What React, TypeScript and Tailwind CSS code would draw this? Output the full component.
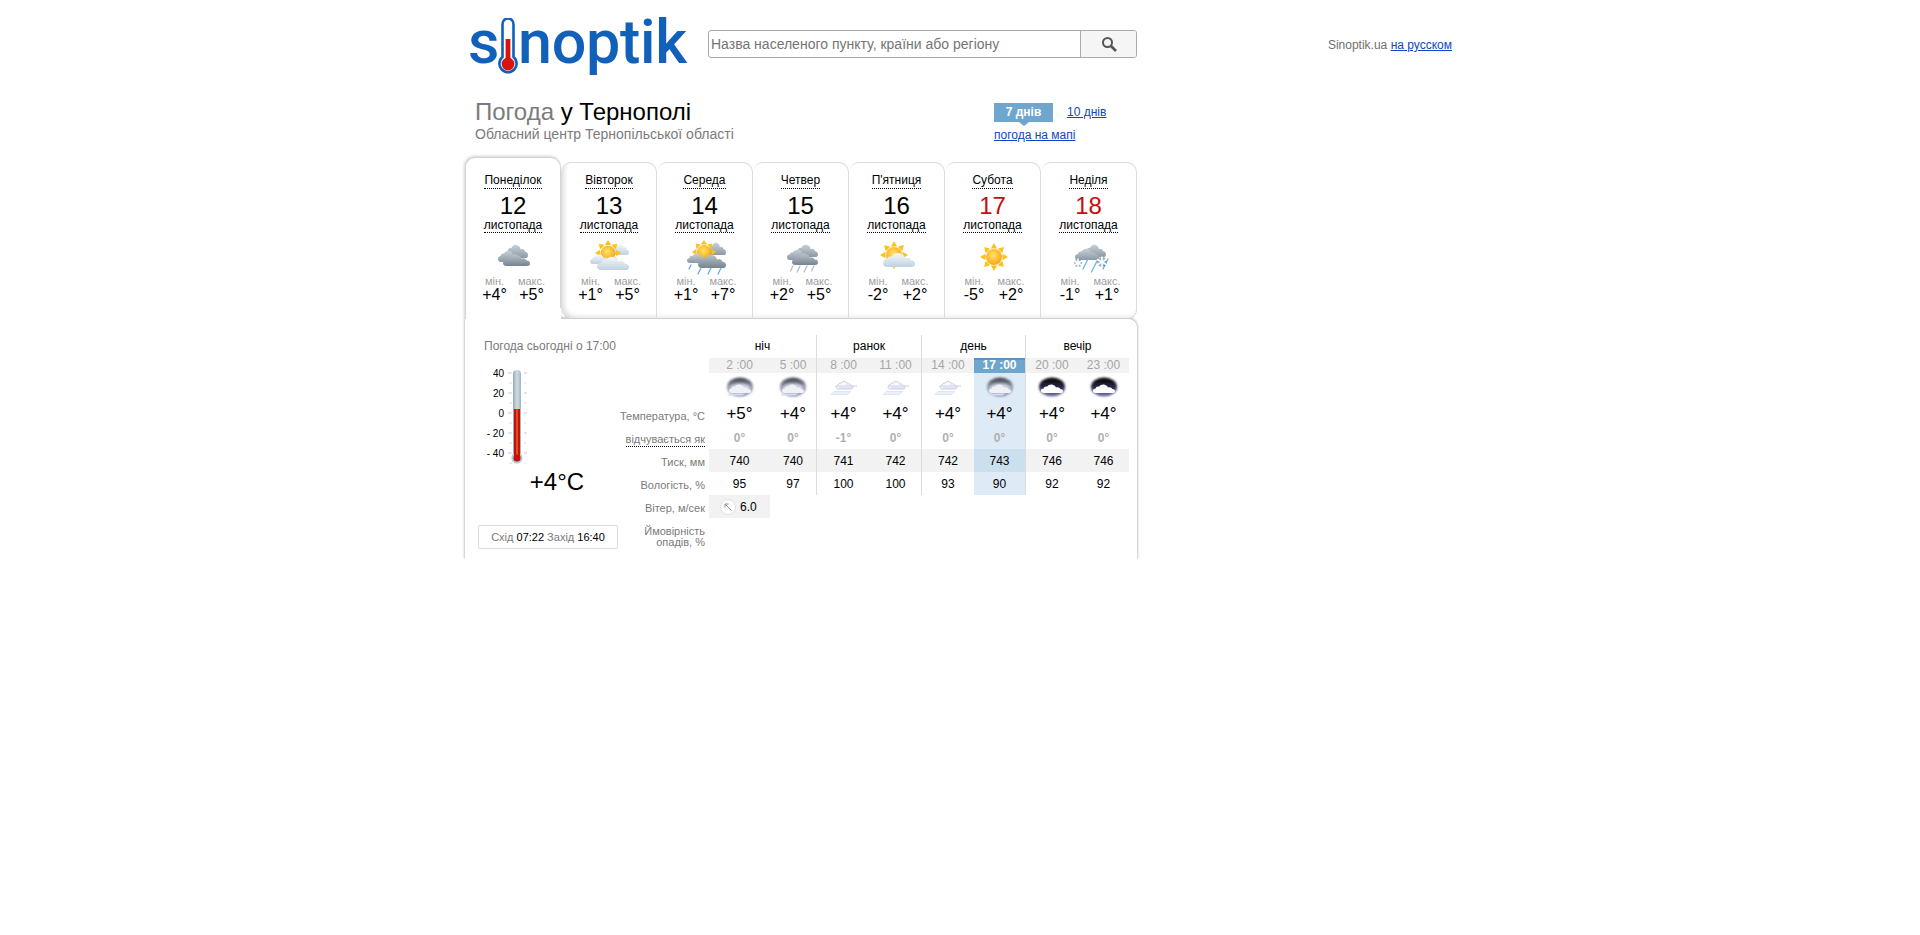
import clsx from "clsx";

const days = [
  { name: "Понеділок", date: 12, min: "+4°", max: "+5°", icon: "cloudy" },
  { name: "Вівторок", date: 13, min: "+1°", max: "+5°", icon: "partly" },
  { name: "Середа", date: 14, min: "+1°", max: "+7°", icon: "sunrain" },
  { name: "Четвер", date: 15, min: "+2°", max: "+5°", icon: "rain" },
  { name: "П'ятниця", date: 16, min: "-2°", max: "+2°", icon: "suncloud" },
  { name: "Субота", date: 17, min: "-5°", max: "+2°", icon: "sun", red: true },
  { name: "Неділя", date: 18, min: "-1°", max: "+1°", icon: "snow", red: true },
];

const hours = [
  { time: "2 :00", sky: "day", temp: "+5°", feel: "0°", pressure: 740, humidity: 95 },
  { time: "5 :00", sky: "day", temp: "+4°", feel: "0°", pressure: 740, humidity: 97 },
  { time: "8 :00", sky: "haze", temp: "+4°", feel: "-1°", pressure: 741, humidity: 100, sep: true },
  { time: "11 :00", sky: "haze", temp: "+4°", feel: "0°", pressure: 742, humidity: 100 },
  { time: "14 :00", sky: "haze", temp: "+4°", feel: "0°", pressure: 742, humidity: 93, sep: true },
  { time: "17 :00", sky: "day", temp: "+4°", feel: "0°", pressure: 743, humidity: 90, active: true },
  { time: "20 :00", sky: "night", temp: "+4°", feel: "0°", pressure: 746, humidity: 92, sep: true },
  { time: "23 :00", sky: "night", temp: "+4°", feel: "0°", pressure: 746, humidity: 92 },
];

const cols = "grid grid-cols-[61px_46px_54px_51px_53px_51px_53px_51px]";
const CLOUD =
  "M5 20C2 20 0 18 0 15C0 12 2 10 5 10C5 7 8 5 11 6C13 2 18 0 22 2C25 3 27 5 27 8C30 6 34 8 35 11C38 11 40 13 40 16C40 19 38 20 35 20Z";

function Cloud({ x, y, w, h, fill }: { x: number; y: number; w: number; h: number; fill: string }) {
  return <path d={CLOUD} fill={fill} transform={`translate(${x} ${y}) scale(${w / 40} ${h / 20})`} />;
}

function Sun({ cx, cy, r, tip }: { cx: number; cy: number; r: number; tip: number }) {
  return (
    <g>
      {[0, 45, 90, 135, 180, 225, 270, 315].map((a) => (
        <path
          key={a}
          d={`M${cx - 3.2} ${cy - r - 0.5}L${cx} ${cy - tip}L${cx + 3.2} ${cy - r - 0.5}Z`}
          fill="#fbc21a"
          transform={`rotate(${a} ${cx} ${cy})`}
        />
      ))}
      <circle cx={cx} cy={cy} r={r} fill="url(#sunFill)" />
    </g>
  );
}

function Streaks({ items, color }: { items: number[][]; color: string }) {
  return (
    <g stroke={color} strokeWidth="1.3" strokeLinecap="round">
      {items.map(([x, y, l], i) => (
        <line key={i} x1={x} y1={y} x2={x - l / 2} y2={y + l} />
      ))}
    </g>
  );
}

function Flake({ x, y, r }: { x: number; y: number; r: number }) {
  return (
    <g stroke="#fff" strokeWidth="1.6" strokeLinecap="round">
      <circle cx={x} cy={y} r={r} fill="#5f7f95" stroke="none" opacity="0.6" />
      {[0, 60, 120].map((a) => (
        <line key={a} x1={x} y1={y - r} x2={x} y2={y + r} transform={`rotate(${a} ${x} ${y})`} />
      ))}
    </g>
  );
}

function SkyIcon({ kind }: { kind: string }) {
  return (
    <svg width="50" height="36" viewBox="0 0 50 36" className="block mx-auto">
      {kind === "cloudy" && (
        <g>
          <Cloud x={17} y={5} w={23} h={14} fill="url(#greyFill)" />
          <Cloud x={10} y={11} w={22} h={12} fill="url(#greyFill)" />
          <Cloud x={15} y={15} w={27} h={12} fill="url(#darkFill)" />
        </g>
      )}
      {kind === "partly" && (
        <g>
          <Cloud x={28} y={4} w={17} h={12} fill="url(#paleFill)" />
          <Sun cx={24} cy={14} r={7.5} tip={13} />
          <Cloud x={6} y={15} w={20} h={10} fill="url(#paleFill)" />
          <Cloud x={13} y={17} w={32} h={14} fill="url(#paleFill)" />
        </g>
      )}
      {kind === "sunrain" && (
        <g>
          <Cloud x={27} y={3} w={19} h={13} fill="url(#greyFill)" />
          <Sun cx={24} cy={13} r={7} tip={12} />
          <Cloud x={7} y={14} w={20} h={10} fill="url(#greyFill)" />
          <Cloud x={18} y={15} w={28} h={14} fill="url(#darkFill)" />
          <Streaks items={[[11, 26, 4], [21, 29, 6], [31, 29, 6], [41, 29, 6]]} color="#5fb0e0" />
        </g>
      )}
      {kind === "rain" && (
        <g>
          <Cloud x={19} y={5} w={23} h={13} fill="url(#greyFill)" />
          <Cloud x={11} y={10} w={22} h={11} fill="url(#greyFill)" />
          <Cloud x={16} y={14} w={26} h={12} fill="url(#darkFill)" />
          <Streaks items={[[17, 27, 5], [24, 27, 6], [31, 27, 6], [38, 27, 5]]} color="#b4bec6" />
        </g>
      )}
      {kind === "suncloud" && (
        <g>
          <Sun cx={22} cy={16} r={8} tip={14} />
          <Cloud x={11} y={13} w={32} h={15} fill="url(#paleFill)" />
        </g>
      )}
      {kind === "sun" && <Sun cx={26} cy={18} r={8} tip={14} />}
      {kind === "snow" && (
        <g>
          <Cloud x={20} y={5} w={22} h={13} fill="url(#greyFill)" />
          <Cloud x={11} y={9} w={24} h={12} fill="url(#greyFill)" />
          <Streaks items={[[24, 20, 10], [33, 22, 11], [44, 20, 10]]} color="#6cb5e2" />
          <Flake x={14} y={24} r={4} />
          <Flake x={38} y={23} r={5} />
        </g>
      )}
    </svg>
  );
}

function HourIcon({ kind }: { kind: string }) {
  if (kind === "haze") {
    return (
      <svg width="32" height="24" viewBox="0 0 32 24" className="block mx-auto">
        <g transform="translate(0 2)">
          <Cloud x={8} y={4} w={17} h={8} fill="#f8f9fd" />
          <path d={CLOUD} fill="none" stroke="#bcc2de" strokeWidth="2" transform="translate(8 4) scale(.425 .4)" />
          <path d="M8 9H29M11 11H25" stroke="#c8cde4" strokeWidth="1" />
          <path d="M6 14.5H23L19 17.5H3Z" fill="#eaf1fa" stroke="#cbd9ec" strokeWidth=".6" />
        </g>
      </svg>
    );
  }
  const night = kind === "night";
  return (
    <svg width="32" height="24" viewBox="0 0 32 24" className="block mx-auto">
      <ellipse cx="16" cy="12" rx="13" ry="9.5" fill={night ? "url(#nightFill)" : "url(#dayFill)"} filter="url(#soft)" />
      {!night && <ellipse cx="16" cy="13.5" rx="10.5" ry="5" fill="#cdd1df" filter="url(#soft)" />}
      <Cloud x={5} y={9} w={22} h={9} fill={night ? "#ffffff" : "#f0f1f7"} />
      {!night && <path d="M6 18.5H22L18 20.5H3Z" fill="#d4deee" />}
    </svg>
  );
}

function SharedDefs() {
  return (
    <svg width="0" height="0" className="absolute">
      <defs>
        <linearGradient id="greyFill" x1="0" y1="0" x2="0" y2="1">
          <stop offset="0" stopColor="#c8d0d6" />
          <stop offset="1" stopColor="#8b99a5" />
        </linearGradient>
        <linearGradient id="darkFill" x1="0" y1="0" x2="0" y2="1">
          <stop offset="0" stopColor="#b8c2ca" />
          <stop offset="1" stopColor="#76848f" />
        </linearGradient>
        <linearGradient id="paleFill" x1="0" y1="0" x2="0" y2="1">
          <stop offset="0" stopColor="#f6f8fa" />
          <stop offset="1" stopColor="#bfd2e0" />
        </linearGradient>
        <radialGradient id="sunFill" cx="0.45" cy="0.4" r="0.6">
          <stop offset="0" stopColor="#ffe36b" />
          <stop offset="1" stopColor="#f9a611" />
        </radialGradient>
        <linearGradient id="dayFill" x1="0" y1="0" x2="0" y2="1">
          <stop offset="0" stopColor="#3a3c44" />
          <stop offset="0.5" stopColor="#9a9eb0" />
          <stop offset="1" stopColor="#8484b4" />
        </linearGradient>
        <linearGradient id="nightFill" x1="0" y1="0" x2="0" y2="1">
          <stop offset="0" stopColor="#000000" />
          <stop offset="0.5" stopColor="#2a2a44" />
          <stop offset="1" stopColor="#7472ae" />
        </linearGradient>
        <filter id="soft" x="-20%" y="-20%" width="140%" height="140%">
          <feGaussianBlur stdDeviation="0.8" />
        </filter>
      </defs>
    </svg>
  );
}

function Logo() {
  return (
    <div className="flex h-[80px] w-[176px] ml-[3px] shrink-0 text-[#1160b9] font-['Roboto',sans-serif] font-medium text-[61px] leading-[80px] tracking-[-0.3px]">
      <span className="mt-[2px]">s</span>
      <svg width="20" height="58" viewBox="0 0 20 58" className="mt-[18px] ml-[-1px] shrink-0">
        <path d="M4.5 6a5.5 5.5 0 0 1 11 0V39a8.6 8.6 0 1 1-11 0Z" fill="#fff" stroke="#1160b9" strokeWidth="2.6" />
        <rect x="7.6" y="21" width="4.8" height="22" fill="#d8140f" />
        <circle cx="10" cy="46" r="6.4" fill="#d8140f" />
      </svg>
      <span className="mt-[2px]">noptik</span>
    </div>
  );
}

function Thermometer() {
  const scale = [
    { y: 7, label: "40" },
    { y: 27, label: "20" },
    { y: 47, label: "0" },
    { y: 67, label: "- 20" },
    { y: 87, label: "- 40" },
  ];
  return (
    <svg width="46" height="101" viewBox="0 0 46 101" className="block ml-[1px]">
      <defs>
        <linearGradient id="tube" x1="0" y1="0" x2="1" y2="0">
          <stop offset="0" stopColor="#8fa9ba" />
          <stop offset="0.5" stopColor="#d3dde3" />
          <stop offset="1" stopColor="#9fb5c3" />
        </linearGradient>
      </defs>
      {scale.map((s) => (
        <g key={s.y}>
          <text x="19" y={s.y + 3.5} textAnchor="end" fontSize="10" fill="#000" fontFamily="Liberation Sans">
            {s.label}
          </text>
          <path d={`M23 ${s.y}H27M39 ${s.y}H42`} stroke="#c8c8c8" />
          <path d={`M24 ${s.y + 10}H27M39 ${s.y + 10}H41`} stroke="#dcdcdc" />
        </g>
      ))}
      <rect x="28" y="4" width="8" height="90" rx="4" fill="url(#tube)" />
      <circle cx="32" cy="92" r="5.6" fill="#b7c9d5" />
      <rect x="29" y="43" width="6" height="49" fill="#c80f0f" />
      <rect x="31.5" y="43" width="1" height="46" fill="#e8951a" />
      <circle cx="32" cy="92" r="3.6" fill="#c80f0f" />
    </svg>
  );
}

function Tab({ day, index }: { day: (typeof days)[number]; index: number }) {
  const first = index === 0;
  return (
    <div
      className={clsx(
        "relative w-[96px] text-center bg-white rounded-t-[10px]",
        first
          ? "h-[162px] pt-[15px] border-t border-l border-r border-[#d5d5d5] shadow-[-1px_-1px_3px_rgba(0,0,0,0.18)] [clip-path:inset(-6px_-6px_0_-6px)]"
          : "h-[157px] pt-[10px] border-t border-r border-b border-[#dcdcdc] border-b-[#cfcfcf] shadow-[inset_0_-5px_5px_-4px_rgba(0,0,0,0.1)]",
        index === 1 && "border-l rounded-bl-[11px] shadow-[inset_5px_-4px_5px_-3px_rgba(0,0,0,0.14)]",
        index === 6 && "rounded-br-[9px]"
      )}
    >
      {first && <div className="absolute right-[-1px] bottom-0 w-[1px] h-[11px] bg-white" />}
      <div className="h-[17px] leading-[15px] text-[12px]">
        <span className="inline-block border-b border-dotted border-black">{day.name}</span>
      </div>
      <div className={clsx("mt-[3px] h-[25px] leading-[26px] text-[24px]", day.red ? "text-[#c80b0b]" : "text-black")}>
        {day.date}
      </div>
      <div className="h-[15px] leading-[14px] text-[12px]">
        <span className="inline-block border-b border-dotted border-black">листопада</span>
      </div>
      <div className="mt-[6px] h-[36px]">
        <SkyIcon kind={day.icon} />
      </div>
      <div className="flex justify-center">
        <div className="w-[37px]">
          <div className="h-[13px] leading-[12px] text-[11px] text-[#a0a0a0]">мін.</div>
          <div className="h-[14px] leading-[14px] text-[16px] text-black">{day.min}</div>
        </div>
        <div className="w-[37px]">
          <div className="h-[13px] leading-[12px] text-[11px] text-[#a0a0a0]">макс.</div>
          <div className="h-[14px] leading-[14px] text-[16px] text-black">{day.max}</div>
        </div>
      </div>
    </div>
  );
}

function Row({ label, height, shaded, children }: { label?: React.ReactNode; height: string; shaded?: boolean; children: React.ReactNode }) {
  return (
    <div className={clsx("flex", height)}>
      <div className="w-[87px] shrink-0 text-right text-[11px] leading-[14px] text-[#7a7a7a] pt-[6px] whitespace-nowrap">{label}</div>
      <div className={clsx("ml-[4px] w-[420px]", cols, shaded && "bg-[#f2f2f2]")}>{children}</div>
    </div>
  );
}

function Cell({ hour, className, children }: { hour: (typeof hours)[number]; className?: string; children: React.ReactNode }) {
  return (
    <div
      className={clsx(
        "flex items-center justify-center text-center",
        hour.sep && "border-l border-[#dcdcdc]",
        hour.active && "bg-[#deebf6]",
        className
      )}
    >
      {children}
    </div>
  );
}

export default function App() {
  return (
    <div className="min-h-[935px] bg-white font-['Liberation_Sans',Arial,sans-serif] text-black">
      <SharedDefs />
      <div className="w-[1000px] ml-[465px]">
        {/* шапка */}
        <div className="h-[100px] flex">
          <Logo />
          <div className="flex h-[28px] mt-[30px] w-[429px] border border-[#a9a9a9] rounded-[3px] overflow-hidden shrink-0 ml-[64px]">
            <input
              className="flex-1 min-w-0 px-[2px] text-[14px] outline-none placeholder:text-[#757575]"
              placeholder="Назва населеного пункту, країни або регіону"
            />
            <div className="w-[56px] bg-[#f5f5f5] border-l border-[#a9a9a9] flex items-center justify-center">
              <svg width="16" height="16" viewBox="0 0 16 16" fill="none" stroke="#555" strokeWidth="2">
                <circle cx="6.5" cy="6.5" r="4.5" />
                <path d="M10 10L15 15" strokeWidth="2.6" />
              </svg>
            </div>
          </div>
          <div className="ml-auto pt-[37px] text-[12px] leading-[16px] text-[#6f6f6f] pr-[13px] text-right">
            Sinoptik.ua <a className="text-[#0d47c4] underline">на русском</a>
          </div>
        </div>

        {/* заголовок */}
        <div className="h-[50px] w-[672px] flex">
          <div className="w-[529px] pl-[10px] mt-[-2px]">
            <h1 className="text-[24px] leading-[28px] font-normal">
              <span className="text-[#7b7b7b]">Погода</span> у Тернополі
            </h1>
            <div className="text-[14px] leading-[16px] text-[#7b7b7b]">Обласний центр Тернопільської області</div>
          </div>
          <div className="text-[12px]">
            <div className="flex mt-[3px] h-[19px]">
              <div className="relative w-[59px] bg-[#6fa6cd] text-white font-bold text-center leading-[19px]">
                7 днів
                <div className="absolute left-[25px] top-[19px] border-x-[5px] border-x-transparent border-t-[4px] border-t-[#6fa6cd]" />
              </div>
              <a className="ml-[14px] text-[#0d47c4] underline leading-[19px]">10 днів</a>
            </div>
            <a className="block mt-[5px] leading-[16px] text-[#0d47c4] underline">погода на мапі</a>
          </div>
        </div>

        {/* вікно прогнозу */}
        <div className="w-[682px] ml-[-5px] px-[5px] overflow-hidden pt-[7px] h-[409px]">
          <div className="relative z-10 flex items-end h-[162px]">
            {days.map((day, i) => (
              <Tab key={day.name} day={day} index={i} />
            ))}
          </div>
          <div className="mt-[-1px] h-[241px] bg-white border-t border-[#cfcfcf] rounded-tr-[9px] shadow-[0_0_3px_rgba(0,0,0,0.45)] flex pt-[16px]">
            <div className="w-[153px] shrink-0">
              <div className="h-[22px] pl-[19px] text-[12px] leading-[22px] text-[#7a7a7a]">Погода сьогодні о 17:00</div>
              <div className="mt-[9px] pl-[19px]">
                <Thermometer />
              </div>
              <div className="mt-[1px] ml-[64px] w-[56px] h-[28px] text-center text-[24px] leading-[28px] whitespace-nowrap">+4°C</div>
              <div className="mt-[29px] ml-[13px] w-[140px] h-[24px] border border-[#dcdcdc] rounded-[2px] text-center text-[11px] leading-[22px] text-[#7a7a7a] whitespace-nowrap">
                Схід <span className="text-black">07:22</span> Захід <span className="text-black">16:40</span>
              </div>
            </div>

            <div>
              <Row height="h-[23px]">
                {["ніч", "ранок", "день", "вечір"].map((part, i) => (
                  <div
                    key={part}
                    className={clsx("col-span-2 text-center text-[12px] leading-[23px]", i > 0 && "border-l border-[#dcdcdc]")}
                  >
                    {part}
                  </div>
                ))}
              </Row>
              <Row height="h-[15px]" shaded>
                {hours.map((h) => (
                  <Cell
                    key={h.time}
                    hour={h}
                    className={clsx(
                      "text-[12px] leading-[15px]",
                      h.active ? "!bg-[#6fa6cd] shadow-[inset_0_2px_0_#5b93bd] text-white font-bold" : "text-[#a5a5a5]"
                    )}
                  >
                    {h.time}
                  </Cell>
                ))}
              </Row>
              <Row height="h-[27px]">
                {hours.map((h) => (
                  <Cell key={h.time} hour={h}>
                    <HourIcon kind={h.sky} />
                  </Cell>
                ))}
              </Row>
              <Row height="h-[25px]" label={<span className="relative top-[3px]">Температура, °C</span>}>
                {hours.map((h) => (
                  <Cell key={h.time} hour={h} className="text-[17px] pt-[1px]">
                    {h.temp}
                  </Cell>
                ))}
              </Row>
              <Row height="h-[24px]" label={<span className="relative top-[1px] inline-block leading-[13px] border-b border-dotted border-black">відчувається як</span>}>
                {hours.map((h) => (
                  <Cell key={h.time} hour={h} className="text-[12px] font-bold text-[#b0b0b0] pt-[1px]">
                    {h.feel}
                  </Cell>
                ))}
              </Row>
              <Row height="h-[23px]" label="Тиск, мм" shaded>
                {hours.map((h) => (
                  <Cell key={h.time} hour={h} className={clsx("text-[12px]", h.active && "!bg-[#cbdfee]")}>
                    {h.pressure}
                  </Cell>
                ))}
              </Row>
              <Row height="h-[23px]" label="Вологість, %">
                {hours.map((h) => (
                  <Cell key={h.time} hour={h} className="text-[12px]">
                    {h.humidity}
                  </Cell>
                ))}
              </Row>
              <Row height="h-[23px]" label="Вітер, м/сек">
                <div className="bg-[#f2f2f2] flex items-center pl-[11px] text-[12px]">
                  <span className="flex items-center justify-center w-[16px] h-[16px] rounded-full bg-white border border-[#e2e2e2]">
                    <svg width="10" height="10" viewBox="0 0 10 10" fill="none" stroke="#8a8a8a" strokeWidth="1">
                      <path d="M8.5 8.5L2 2M2 5.5V2H5.5" />
                    </svg>
                  </span>
                  <span className="ml-[4px]">6.0</span>
                </div>
              </Row>
              <div className="mt-[8px] w-[87px] text-right text-[11px] leading-[11px] text-[#7a7a7a] whitespace-nowrap">
                Ймовірність
                <br />
                опадів, %
              </div>
            </div>
          </div>
        </div>
      </div>
    </div>
  );
}
